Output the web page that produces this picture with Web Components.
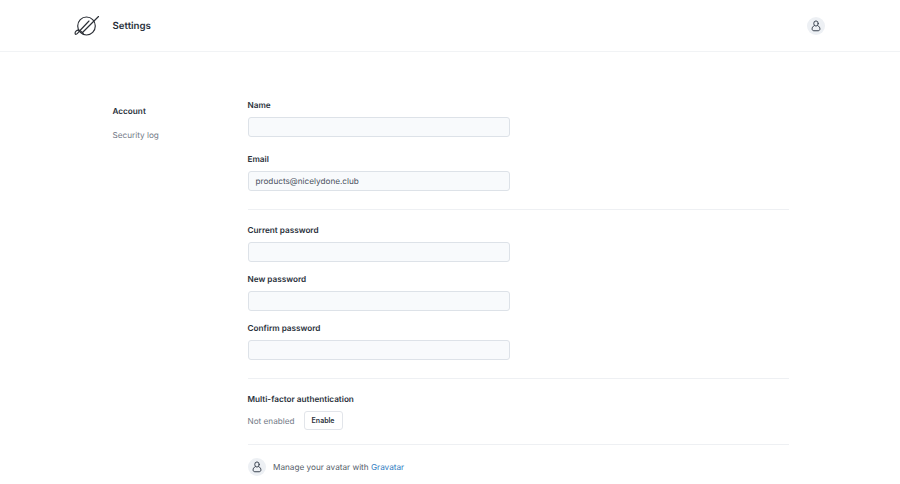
<!DOCTYPE html>
<html lang="en">
<head>
<meta charset="utf-8">
<title>Settings</title>
<style>
  html, body { margin: 0; height: 484px; overflow: hidden; background: #fff; font-family: Inter, "Liberation Sans", sans-serif; text-rendering: geometricPrecision; }
</style>
</head>
<body>
<template id="user-glyph">
  <svg viewBox="0 0 12 14" fill="none" stroke="currentColor" stroke-width="1.2" stroke-linejoin="round" stroke-linecap="round">
    <ellipse cx="6" cy="4" rx="2.7" ry="3.1"/>
    <path d="M3.9 6.6C2.2 7.4 1.3 8.8 1.3 10.4C1.3 12 2.2 12.7 3.6 12.7H8.4C9.8 12.7 10.7 12 10.7 10.4C10.7 8.8 9.8 7.4 8.1 6.6"/>
  </svg>
</template>

<settings-page>
  <top-bar slot="header" title="Settings"></top-bar>
  <side-nav slot="nav">
    <a class="on">Account</a>
    <a>Security log</a>
  </side-nav>
  <settings-form slot="main"></settings-form>
</settings-page>

<script>
function userGlyph() {
  return document.getElementById('user-glyph').content.cloneNode(true);
}

class SettingsPage extends HTMLElement {
  constructor() {
    super();
    this.attachShadow({ mode: 'open' }).innerHTML = `
      <style>
        :host { display: block; }
        .body {
          display: grid;
          grid-template-columns: 135px 541px;
          padding: 46px 0 0 112.5px;
        }
      </style>
      <slot name="header"></slot>
      <div class="body">
        <slot name="nav"></slot>
        <slot name="main"></slot>
      </div>`;
  }
}

class AvatarChip extends HTMLElement {
  constructor() {
    super();
    this.attachShadow({ mode: 'open' }).innerHTML = `
      <style>
        :host {
          display: flex;
          align-items: center;
          justify-content: center;
          width: 18.5px;
          height: 18.5px;
          border-radius: 50%;
          background: #edf0f4;
          color: #3a4350;
          flex: none;
        }
        svg { width: 10px; height: 12px; display: block; }
      </style>`;
    this.shadowRoot.appendChild(userGlyph());
  }
}

class TopBar extends HTMLElement {
  constructor() {
    super();
    this.attachShadow({ mode: 'open' }).innerHTML = `
      <style>
        :host {
          display: flex;
          align-items: center;
          height: 50px;
          border-bottom: 1px solid #f1f3f5;
          padding: 1px 75px 0 74px;
        }
        .logo { width: 26px; height: 22px; flex: none; color: #2b2f36; }
        h1 {
          margin: 2px 0 0 12.5px;
          font-size: 9.7px;
          line-height: 14px;
          font-weight: 600;
          color: #2a313b;
          flex: 1;
        }
      </style>
      <svg class="logo" viewBox="0 0 26 22" fill="none" stroke="currentColor" stroke-width="1.15" stroke-linecap="round">
        <ellipse cx="12.5" cy="11" rx="8.8" ry="9"/>
        <path d="M24.5 1.5L8.5 17.5"/>
        <path d="M15 6L6 15.5C4.6 17 3 19.8 1.8 19.4C0.6 18.9 1 17.2 2 16.2C3.2 15 5 14.9 6.5 15.9C7.6 16.6 8.4 17.8 9.4 18.8"/>
      </svg>
      <h1></h1>
      <avatar-chip></avatar-chip>`;
    this.shadowRoot.querySelector('h1').textContent = this.getAttribute('title');
    this.removeAttribute('title');
  }
}

class SideNav extends HTMLElement {
  constructor() {
    super();
    this.attachShadow({ mode: 'open' }).innerHTML = `
      <style>
        :host {
          display: flex;
          flex-direction: column;
          gap: 9.5px;
          padding-top: 6px;
          font-size: 8.2px;
          line-height: 14px;
          color: #737b87;
        }
        ::slotted(.on) { color: #2a313b; font-weight: 600; }
      </style>
      <slot></slot>`;
  }
}

class FormField extends HTMLElement {
  constructor() {
    super();
    this.attachShadow({ mode: 'open' }).innerHTML = `
      <style>
        :host { display: block; }
        label {
          display: block;
          font-size: 8.2px;
          line-height: 14px;
          font-weight: 600;
          color: #2a313b;
          margin-bottom: 5px;
        }
        .box {
          box-sizing: border-box;
          width: 262.5px;
          height: 20px;
          padding: 0 7px;
          border: 1px solid #dde2e8;
          border-radius: 3px;
          background: #f8fafc;
          font-size: 8.2px;
          line-height: 18px;
          color: #48505c;
        }
      </style>
      <label></label>
      <div class="box"></div>`;
    this.shadowRoot.querySelector('label').textContent = this.getAttribute('label');
    this.shadowRoot.querySelector('.box').textContent = this.getAttribute('value') || '';
  }
}

class SettingsForm extends HTMLElement {
  constructor() {
    super();
    this.attachShadow({ mode: 'open' }).innerHTML = `
      <style>
        :host { display: block; margin-top: -0.4px; }
        .group { display: flex; flex-direction: column; }
        .identity { gap: 15px; }
        .secret { gap: 10.2px; }
        hr { border: 0; border-top: 1px solid #eef0f3; margin: 18px 0 13px; }
        h2 {
          margin: 0 0 4.5px;
          font-size: 8.2px;
          line-height: 14px;
          font-weight: 600;
          color: #2a313b;
        }
        .mfa {
          display: flex;
          align-items: center;
          gap: 9px;
          font-size: 8.2px;
          color: #737b87;
        }
        .mfa span { padding-top: 1px; }
        button {
          box-sizing: border-box;
          height: 19px;
          width: 39px;
          padding: 0;
          border: 1px solid #e2e5ea;
          border-radius: 3px;
          background: #fff;
          font: 600 7px Inter, "Liberation Sans", sans-serif;
          color: #2a313b;
        }
        .avatar {
          display: flex;
          align-items: center;
          gap: 7px;
          font-size: 8.2px;
          color: #555d69;
        }
        a { color: #2f7cc1; }
      </style>
      <div class="group identity">
        <form-field label="Name"></form-field>
        <form-field label="Email" value="products@nicelydone.club"></form-field>
      </div>
      <hr>
      <div class="group secret">
        <form-field label="Current password"></form-field>
        <form-field label="New password"></form-field>
        <form-field label="Confirm password"></form-field>
      </div>
      <hr style="margin-bottom:13.5px">
      <h2>Multi-factor authentication</h2>
      <div class="mfa"><span>Not enabled</span><button>Enable</button></div>
      <hr style="margin:14px 0 13px">
      <div class="avatar"><avatar-chip></avatar-chip><span>Manage your avatar with <a>Gravatar</a></span></div>`;
  }
}

customElements.define('avatar-chip', AvatarChip);
customElements.define('top-bar', TopBar);
customElements.define('side-nav', SideNav);
customElements.define('form-field', FormField);
customElements.define('settings-form', SettingsForm);
customElements.define('settings-page', SettingsPage);
</script>
</body>
</html>
